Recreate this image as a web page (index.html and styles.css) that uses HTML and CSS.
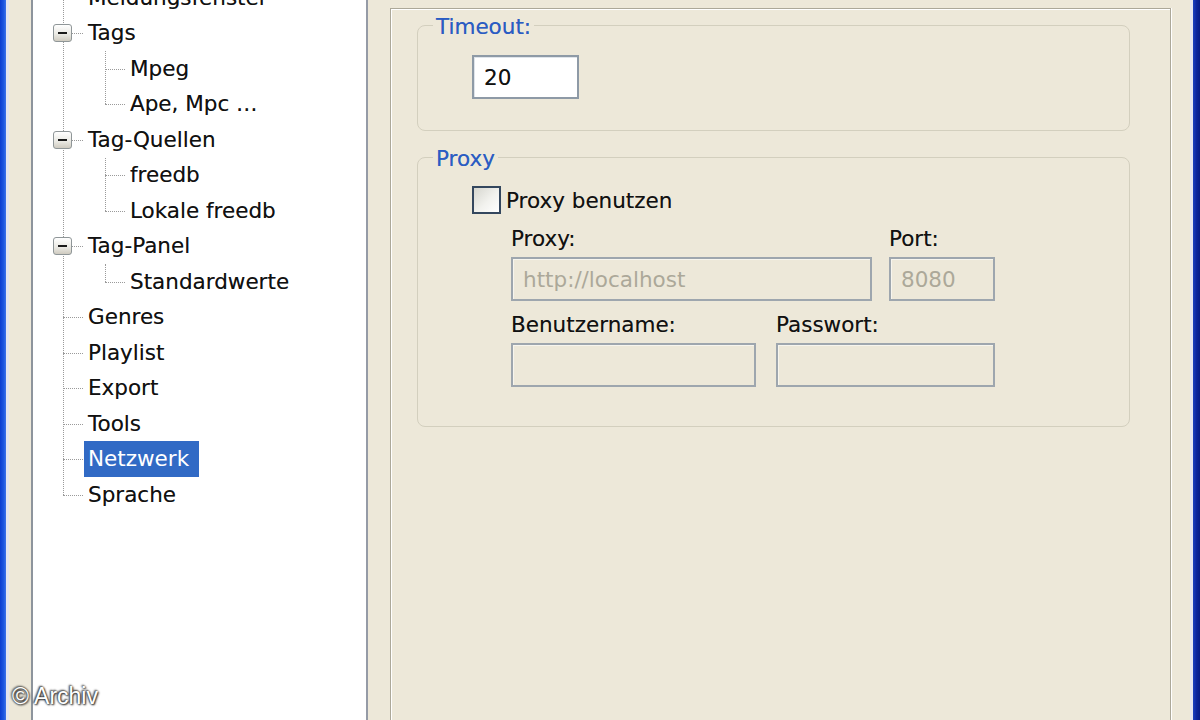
FILE: index.html
```html
<!DOCTYPE html>
<html lang="de">
<head>
<meta charset="utf-8">
<title>Einstellungen – Netzwerk</title>
<link rel="stylesheet" href="styles.css">
</head>
<body>
<div class="window">
  <div class="frame frame-left"></div>
  <div class="frame-strip"></div>
  <div class="side">
    <div class="tree">
      <ul class="tree-root">
        <li><div class="node"><span class="label">Meldungsfenster</span></div></li>
        <li>
          <div class="node"><span class="expander"></span><span class="label">Tags</span></div>
          <ul class="tree-sub">
            <li><div class="node"><span class="label">Mpeg</span></div></li>
            <li><div class="node"><span class="label">Ape, Mpc …</span></div></li>
          </ul>
        </li>
        <li>
          <div class="node"><span class="expander"></span><span class="label">Tag-Quellen</span></div>
          <ul class="tree-sub">
            <li><div class="node"><span class="label">freedb</span></div></li>
            <li><div class="node"><span class="label">Lokale freedb</span></div></li>
          </ul>
        </li>
        <li>
          <div class="node"><span class="expander"></span><span class="label">Tag-Panel</span></div>
          <ul class="tree-sub">
            <li><div class="node"><span class="label">Standardwerte</span></div></li>
          </ul>
        </li>
        <li><div class="node"><span class="label">Genres</span></div></li>
        <li><div class="node"><span class="label">Playlist</span></div></li>
        <li><div class="node"><span class="label">Export</span></div></li>
        <li><div class="node"><span class="label">Tools</span></div></li>
        <li><div class="node"><span class="label selected">Netzwerk</span></div></li>
        <li><div class="node"><span class="label">Sprache</span></div></li>
      </ul>
    </div>
  </div>
  <div class="content">
    <div class="page">
      <fieldset class="group group-timeout">
        <legend>Timeout:</legend>
        <div class="group-body timeout-body">
          <div class="textbox timeout-box">20</div>
        </div>
      </fieldset>
      <fieldset class="group group-proxy">
        <legend>Proxy</legend>
        <div class="group-body proxy-body">
          <div class="checkrow"><span class="checkbox"></span><span class="checktext">Proxy benutzen</span></div>
          <div class="fields">
            <div class="row">
              <div class="field f-host">
                <div class="flabel">Proxy:</div>
                <div class="textbox disabled">http://localhost</div>
              </div>
              <div class="field f-port">
                <div class="flabel">Port:</div>
                <div class="textbox disabled">8080</div>
              </div>
            </div>
            <div class="row row-2">
              <div class="field f-user">
                <div class="flabel">Benutzername:</div>
                <div class="textbox disabled"></div>
              </div>
              <div class="field f-pass">
                <div class="flabel">Passwort:</div>
                <div class="textbox disabled"></div>
              </div>
            </div>
          </div>
        </div>
      </fieldset>
    </div>
  </div>
  <div class="frame-strip"></div>
  <div class="frame frame-right"></div>
  <div class="watermark">© Archiv</div>
</div>
</body>
</html>
```

FILE: styles.css
```css
* { box-sizing: border-box; }

html, body {
  margin: 0;
  padding: 0;
}

body {
  width: 1200px;
  height: 720px;
  overflow: hidden;
  background: #ede8d9;
  font-family: "DejaVu Sans", Verdana, sans-serif;
  font-size: 21.5px;
  color: #111;
}

.window {
  position: relative;
  display: flex;
  width: 1200px;
  height: 720px;
  overflow: hidden;
  background: #ede8d9;
}

.frame { flex: none; height: 100%; }
.frame-left {
  width: 6px;
  background: linear-gradient(to right, #0a3bd0, #1d55e0 60%, #3d73ea);
}
.frame-right {
  width: 7px;
  background: linear-gradient(to right, #1a3fc0, #0a249e 50%, #051a86);
}
.frame-strip {
  flex: none;
  width: 3px;
  height: 100%;
  background: #e4e4ee;
}

/* ---------- left tree ---------- */
.side {
  flex: none;
  width: 359px;
  padding-left: 22px;
  height: 100%;
}

.tree {
  width: 337px;
  height: 100%;
  background: #fff;
  border-left: 2px solid #8d949c;
  border-right: 2px solid #959ba6;
  overflow: hidden;
  text-shadow: 0 0 0.6px rgba(0, 0, 0, 0.45);
}

.tree ul {
  list-style: none;
  margin: 0;
  padding: 0;
}

.tree-root {
  position: relative;
  margin-top: -20px !important;
}

.tree-root::before {
  content: "";
  position: absolute;
  left: 30px;
  top: 0;
  bottom: 17.75px;
  border-left: 1px dotted #9a9a9a;
}

.tree-sub {
  position: relative;
}

.tree-sub::before {
  content: "";
  position: absolute;
  left: 72px;
  top: 0;
  bottom: 17.75px;
  border-left: 1px dotted #9a9a9a;
}

.node {
  position: relative;
  display: flex;
  align-items: center;
  height: 35.5px;
  padding-left: 51px;
  white-space: nowrap;
}

.node::before {
  content: "";
  position: absolute;
  left: 30px;
  width: 20px;
  top: 50%;
  border-top: 1px dotted #9a9a9a;
}

.tree-sub .node { padding-left: 93px; }
.tree-sub .node::before { left: 72px; width: 20px; }

.label {
  display: inline-block;
  padding: 0 4px;
  line-height: 36px;
}

.label.selected {
  background: #316ac5;
  color: #fff;
  padding-right: 10px;
  text-shadow: none;
}

.expander {
  position: absolute;
  z-index: 1;
  left: 20px;
  top: 50%;
  width: 19px;
  height: 18px;
  margin-top: -9px;
  border: 1px solid #8f9698;
  border-radius: 3px;
  background: linear-gradient(to bottom, #ffffff, #e9e8e2 60%, #cfcbc0);
}

.expander::after {
  content: "";
  position: absolute;
  left: 4px;
  right: 4px;
  top: 7px;
  height: 2px;
  background: #1a1a1a;
}

/* ---------- right content ---------- */
.content {
  flex: 1;
  height: 100%;
  padding: 8px 19px 0 22px;
  text-shadow: 0 0 0.6px rgba(0, 0, 0, 0.4);
}

.page {
  height: 712px;
  border-top: 1px solid #aca899;
  border-left: 1px solid #aca899;
  border-right: 1px solid #aca899;
  box-shadow: inset 1px 1px 0 #fff, 1px 0 0 #fff;
  padding: 3px 40px 0 26px;
}

.group {
  margin: 0;
  padding: 0;
  border: 1px solid #d3cfbe;
  border-radius: 8px;
  min-width: 0;
}

.group legend {
  margin-left: 15px;
  padding: 3px 3px 0;
  line-height: 24px;
  color: #2a5cc4;
  text-shadow: 0 0 0.6px rgba(20, 60, 160, 0.5);
}

.group-timeout { margin-top: 0; }
.group-proxy { margin-top: 13px; }

.group-body { padding-left: 54px; }

.timeout-body {
  padding-top: 16px;
  padding-bottom: 31px;
}

.textbox {
  height: 44px;
  border: 2px solid #8e9aa6;
  background: #fff;
  box-shadow: inset 1px 1px 0 #dfe4ea;
  display: flex;
  align-items: center;
  padding-left: 10px;
  white-space: nowrap;
}

.timeout-box { width: 107px; }

.textbox.disabled {
  background: #ede8d9;
  color: #aca899;
  border-color: #9ea6ae;
  box-shadow: inset 1px 1px 0 #f7f5ee;
  text-shadow: none;
}

.proxy-body {
  padding-top: 15px;
  padding-bottom: 39px;
}

.checkrow {
  display: flex;
  align-items: center;
  height: 28px;
}

.checkbox {
  flex: none;
  width: 29px;
  height: 28px;
  border: 2px solid #34475e;
  background: linear-gradient(135deg, #d6d6cf, #f2f2ee 55%, #ffffff);
  margin-right: 5px;
}

.fields { margin-left: 39px; margin-top: 13px; }

.row { display: flex; }
.row-2 { margin-top: 12px; }

.flabel {
  line-height: 24px;
  margin-bottom: 6px;
  white-space: nowrap;
}

.f-host { width: 361px; margin-right: 17px; }
.f-port { width: 106px; }
.f-user { width: 245px; margin-right: 20px; }
.f-pass { width: 219px; }

.watermark {
  position: absolute;
  left: 12px;
  top: 683px;
  font-family: "Liberation Sans", Arial, sans-serif;
  font-size: 23px;
  color: #fff;
  text-shadow: 0 0 2px #333, 1px 1px 2px #222, -1px -1px 2px #444;
}
```
